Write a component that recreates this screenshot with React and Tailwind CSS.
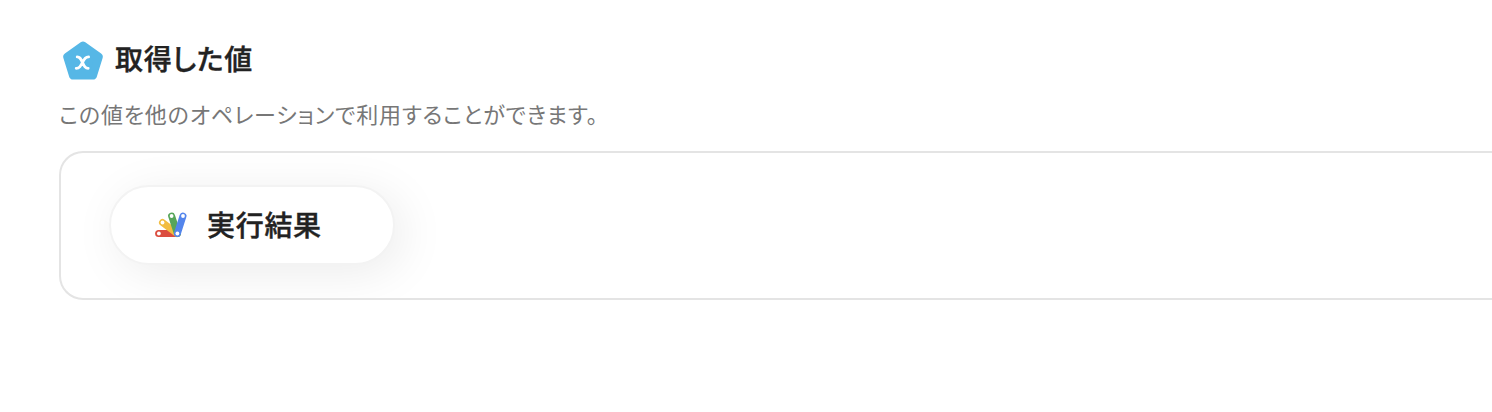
import React from 'react'

function ValueIcon() {
  return (
    <svg className="w-12 h-12 shrink-0" viewBox="0 0 48 48" fill="none">
      <path
        d="M24 9.6L39.8 20.8L34 39.6H14L8.2 20.8Z"
        fill="#56b7e6"
        stroke="#56b7e6"
        strokeWidth="8"
        strokeLinejoin="round"
      />
      <path
        d="M18.2 20.9C21 20.9 21.6 22.6 23.5 26.4C25.4 30.4 26.2 32.3 29.2 32.3M29.6 20.9C26.6 20.9 25.6 22.6 23.5 26.4C21.4 30.4 20.4 32.3 17.2 32.3"
        stroke="#fff"
        strokeWidth="2.8"
        strokeLinecap="round"
      />
    </svg>
  )
}

function AppsScriptIcon() {
  return (
    <svg className="w-8 h-8 shrink-0" viewBox="0 0 32 32" fill="none" strokeWidth="7" strokeLinecap="round">
      <path d="M3.6 24.5H22" stroke="#db4d3f" />
      <path d="M7.5 13.5L22 24.5" stroke="#f2bd42" />
      <path d="M16.6 7L22.4 24.5" stroke="#57a55a" />
      <path d="M28 7L22.4 24.5" stroke="#5385ec" />
      <g fill="#fff">
        <circle cx="3.9" cy="24.5" r="1.9" />
        <circle cx="7.5" cy="13.5" r="1.9" />
        <circle cx="16.6" cy="7" r="1.9" />
        <circle cx="28" cy="7" r="1.9" />
        <circle cx="22.4" cy="24.5" r="1.9" />
      </g>
    </svg>
  )
}

export default function App() {
  return (
    <div className="h-[412px] overflow-hidden bg-white pl-[59px] pt-9 font-['Noto_Sans_CJK_JP',sans-serif] [font-feature-settings:'palt'] antialiased">
      <div className="flex items-center gap-2">
        <ValueIcon />
        <h2 className="pb-1 text-[28px] leading-[44px] font-medium tracking-[0.7px] text-[#222] [-webkit-text-stroke:0.4px_#222]">取得した値</h2>
      </div>
      <p className="mt-[13px] text-[22px] leading-8 tracking-[0.83px] text-[#777]">この値を他のオペレーションで利用することができます。</p>

      <div className="mt-[22px] h-[149px] overflow-hidden rounded-l-3xl border-2 border-r-0 border-[#e4e4e4] pl-12 pt-8">
        <div className="flex h-20 w-[286px] items-center gap-5 rounded-full border-2 border-[#f3f3f3] bg-white pl-11 shadow-[8px_8px_48px_rgba(0,0,0,0.08)]">
          <AppsScriptIcon />
          <span className="pb-0.5 text-[28px] leading-10 font-medium tracking-[0.7px] text-[#222] [-webkit-text-stroke:0.4px_#222]">実行結果</span>
        </div>
      </div>
    </div>
  )
}
